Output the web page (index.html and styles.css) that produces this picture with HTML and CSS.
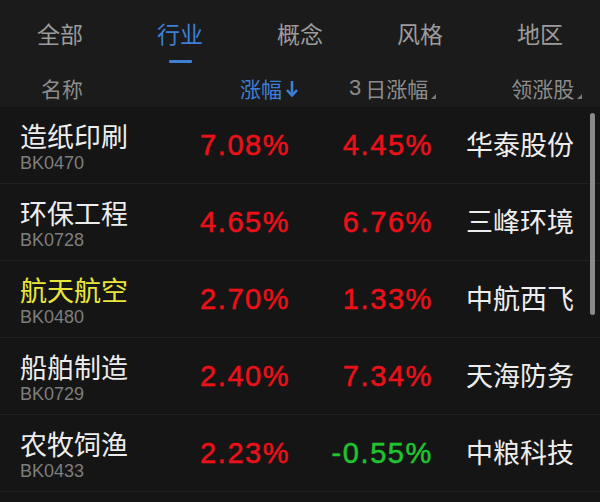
FILE: index.html
```html
<!DOCTYPE html>
<html lang="zh-CN">
<head>
<meta charset="utf-8">
<link rel="stylesheet" href="styles.css">
</head>
<body>
<div class="screen">
  <div class="top">
    <nav class="tabs">
      <div class="tab">全部</div>
      <div class="tab active">行业<span class="bar"></span></div>
      <div class="tab">概念</div>
      <div class="tab">风格</div>
      <div class="tab">地区</div>
    </nav>
    <div class="sort">
      <div class="s-name">名称</div>
      <div class="s-pct active">涨幅<svg class="arrow" width="12" height="16" viewBox="0 0 12 16"><path d="M6 0 V13.5" stroke="#3d7fd6" stroke-width="2.6" fill="none"/><path d="M1 9 L6 14.5 L11 9" stroke="#3d7fd6" stroke-width="2.6" fill="none"/></svg></div>
      <div class="s-3d"><span class="num">3</span>日涨幅<span class="tri"></span></div>
      <div class="s-lead">领涨股<span class="tri"></span></div>
    </div>
  </div>
  <div class="list">
    <div class="row">
      <div class="name"><div class="title">造纸印刷</div><div class="code">BK0470</div></div>
      <div class="pct up">7.08%</div>
      <div class="pct up">4.45%</div>
      <div class="lead">华泰股份</div>
    </div>
    <div class="row">
      <div class="name"><div class="title">环保工程</div><div class="code">BK0728</div></div>
      <div class="pct up">4.65%</div>
      <div class="pct up">6.76%</div>
      <div class="lead">三峰环境</div>
    </div>
    <div class="row">
      <div class="name"><div class="title hl">航天航空</div><div class="code">BK0480</div></div>
      <div class="pct up">2.70%</div>
      <div class="pct up">1.33%</div>
      <div class="lead">中航西飞</div>
    </div>
    <div class="row">
      <div class="name"><div class="title">船舶制造</div><div class="code">BK0729</div></div>
      <div class="pct up">2.40%</div>
      <div class="pct up">7.34%</div>
      <div class="lead">天海防务</div>
    </div>
    <div class="row">
      <div class="name"><div class="title">农牧饲渔</div><div class="code">BK0433</div></div>
      <div class="pct up">2.23%</div>
      <div class="pct down">-0.55%</div>
      <div class="lead">中粮科技</div>
    </div>
    <div class="scrollbar"></div>
  </div>
</div>
</body>
</html>
```
FILE: styles.css
```css
* { box-sizing: border-box; }
html, body { margin: 0; padding: 0; background: #151515; }
body {
  width: 600px;
  height: 502px;
  overflow: hidden;
  font-family: "Liberation Sans", "Noto Sans CJK SC", sans-serif;
}
.screen { width: 600px; height: 502px; position: relative; }
.top { background: #1b1b1b; height: 107px; }
.tabs { display: flex; height: 66px; }
.tab {
  flex: 1;
  display: flex;
  flex-direction: column;
  align-items: center;
  padding-top: 18px;
  font-family: "Noto Sans CJK SC", sans-serif;
  font-size: 23px;
  line-height: 30px;
  color: #9c9c9c;
}
.tab.active { color: #3d7fd6; }
.tab .bar {
  display: block;
  width: 23px;
  height: 3px;
  margin-top: 12px;
  background: #3d7fd6;
  border-radius: 1px;
}
.sort {
  display: flex;
  align-items: center;
  height: 41px;
  padding-top: 3px;
  font-family: "Noto Sans CJK SC", sans-serif;
  font-size: 21px;
  color: #8c8c8c;
}
.sort > div { position: relative; display: flex; align-items: center; }
.s-name { padding-left: 41px; width: 240px; }
.s-pct { color: #3d7fd6; width: 64px; }
.s-pct .arrow { margin-left: 4px; margin-top: 2px; }
.s-3d { margin-left: 45px; }
.s-3d .num { font-family: "Liberation Sans", sans-serif; font-size: 22px; margin-right: 4px; }
.s-lead { margin-left: 83px; }
.tri {
  position: absolute;
  right: -8px;
  bottom: 4px;
  width: 0;
  height: 0;
  border-left: 5px solid transparent;
  border-bottom: 5px solid #7a7a7a;
}
.list { position: relative; }
.row {
  display: grid;
  grid-template-columns: 180px 88px 144px 1fr;
  height: 77px;
  padding-left: 20px;
  border-bottom: 1px solid #202020;
}
.name { padding-top: 13px; }
.title {
  font-family: "Noto Sans CJK SC", sans-serif;
  font-size: 27px;
  line-height: 32px;
  color: #ededed;
}
.title.hl { color: #eae53a; }
.code {
  margin-top: 2px;
  font-size: 18px;
  line-height: 18px;
  color: #7e7e7e;
}
.pct {
  text-align: right;
  padding-top: 22px;
  font-size: 29px;
  line-height: 32px;
  letter-spacing: 1.6px;
  margin-right: -1px;
  -webkit-text-stroke: 0.5px currentColor;
}
.up { color: #ec1018; }
.down { color: #1ec52f; }
.lead {
  padding-left: 34px;
  padding-top: 21px;
  font-family: "Noto Sans CJK SC", sans-serif;
  font-size: 27px;
  line-height: 32px;
  color: #ededed;
  white-space: nowrap;
}
.scrollbar {
  position: absolute;
  left: 590px;
  top: 6px;
  width: 5px;
  height: 202px;
  border-radius: 3px;
  background: #8a8a8a;
}
```
